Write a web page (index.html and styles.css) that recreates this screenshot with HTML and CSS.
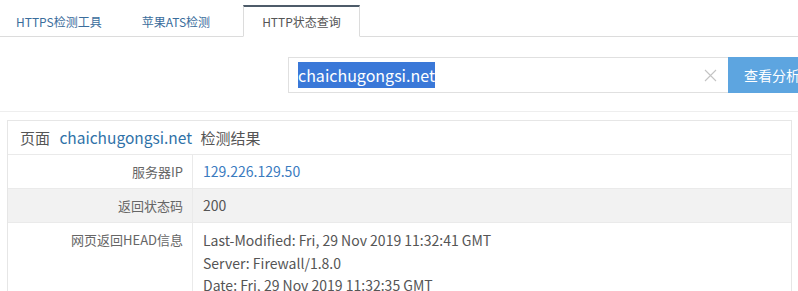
FILE: index.html
```html
<!DOCTYPE html>
<html lang="zh-CN">
<head>
    <meta charset="UTF-8">
    <meta name="viewport" content="width=device-width, initial-scale=1.0">
    <title>HTTP状态查询</title>
    <link rel="stylesheet" href="styles.css">
</head>
<body>
    <div class="tabs">
        <a class="tab" href="#">HTTPS检测工具</a>
        <a class="tab" href="#">苹果ATS检测</a>
        <a class="tab active" href="#">HTTP状态查询</a>
    </div>
    <div class="search-bar">
        <div class="search-box">
            <div class="search-input"><span class="selected">chaichugongsi.net</span></div>
            <span class="clear-btn">
                <svg width="13" height="13" viewBox="0 0 13 13"><path d="M1 1L12 12M12 1L1 12" stroke="#c4c4c4" stroke-width="1.1" fill="none"/></svg>
            </span>
        </div>
        <button class="search-btn">查看分析</button>
    </div>
    <div class="result">
        <div class="result-head">页面 <span class="domain">chaichugongsi.net</span> 检测结果</div>
        <div class="row">
            <div class="label">服务器IP</div>
            <div class="value ip">129.226.129.50</div>
        </div>
        <div class="row grey">
            <div class="label">返回状态码</div>
            <div class="value">200</div>
        </div>
        <div class="row">
            <div class="label">网页返回HEAD信息</div>
            <div class="value lines">
                <p>Last-Modified: Fri, 29 Nov 2019 11:32:41 GMT</p>
                <p>Server: Firewall/1.8.0</p>
                <p>Date: Fri, 29 Nov 2019 11:32:35 GMT</p>
            </div>
        </div>
    </div>
</body>
</html>
```

FILE: styles.css
```css
*{
    margin: 0;
    padding: 0;
    box-sizing: border-box;
}
body{
    width: 100%;
    background-color: #fff;
    color: #555;
    font-family: "Noto Sans CJK SC", "Noto Sans", sans-serif;
    font-size: 13px;
    overflow: hidden;
}
.tabs{
    display: flex;
    height: 37px;
    align-items: flex-end;
    border-bottom: 1px solid #dcdcdc;
}
.tab{
    display: block;
    height: 32px;
    line-height: 30px;
    padding: 0 17px;
    margin-left: 4px;
    margin-bottom: -1px;
    font-size: 12px;
    color: #3a6d9c;
    text-decoration: none;
    border: 1px solid transparent;
    border-top-width: 2px;
}
.tab:first-child{
    margin-left: 0;
    padding-left: 15px;
}
.tab.active{
    margin-left: 15px;
    padding: 0 18px;
    color: #555;
    background-color: #fff;
    border-color: #4d5b69 #dcdcdc #fff #dcdcdc;
}
.search-bar{
    display: flex;
    padding: 20px 0 18px 288px;
    border-bottom: 1px solid #eee;
    width: 840px;
}
.search-box{
    display: flex;
    align-items: center;
    width: 440px;
    height: 36px;
    border: 1px solid #e0e0e0;
    border-right: none;
    padding: 0 9px 0 9px;
}
.search-input{
    flex: 1;
    font-size: 16px;
    color: #333;
}
.selected{
    background-color: #3a78d8;
    color: #fff;
    padding: 1px 0;
}
.clear-btn{
    display: flex;
    margin-right: 2px;
}
.search-btn{
    width: 88px;
    height: 36px;
    border: none;
    background-color: #5da5e0;
    color: #fff;
    font-family: "Noto Sans CJK SC", sans-serif;
    font-size: 14px;
}
.result{
    margin: 8px 6px 0 7px;
    border: 1px solid #e6e6e6;
}
.result-head{
    height: 34px;
    line-height: 33px;
    padding-left: 12px;
    font-size: 15px;
    color: #555;
    border-bottom: 1px solid #eaeaea;
}
.domain{
    color: #2f72a8;
    margin: 0 5px 0 6px;
    font-size: 15.5px;
}
.row{
    display: flex;
    border-bottom: 1px solid #eaeaea;
}
.row.grey{
    background-color: #f2f2f2;
}
.label{
    width: 185px;
    text-align: right;
    padding: 7px 9px 7px 0;
    line-height: 19px;
    border-right: 1px solid #eaeaea;
    color: #666;
}
.value{
    flex: 1;
    padding: 7px 10px;
    line-height: 19px;
    font-size: 14px;
}
.value.ip{
    color: #3a7bbf;
}
.lines{
    padding-top: 6px;
}
.lines p{
    line-height: 22.5px;
}
```
